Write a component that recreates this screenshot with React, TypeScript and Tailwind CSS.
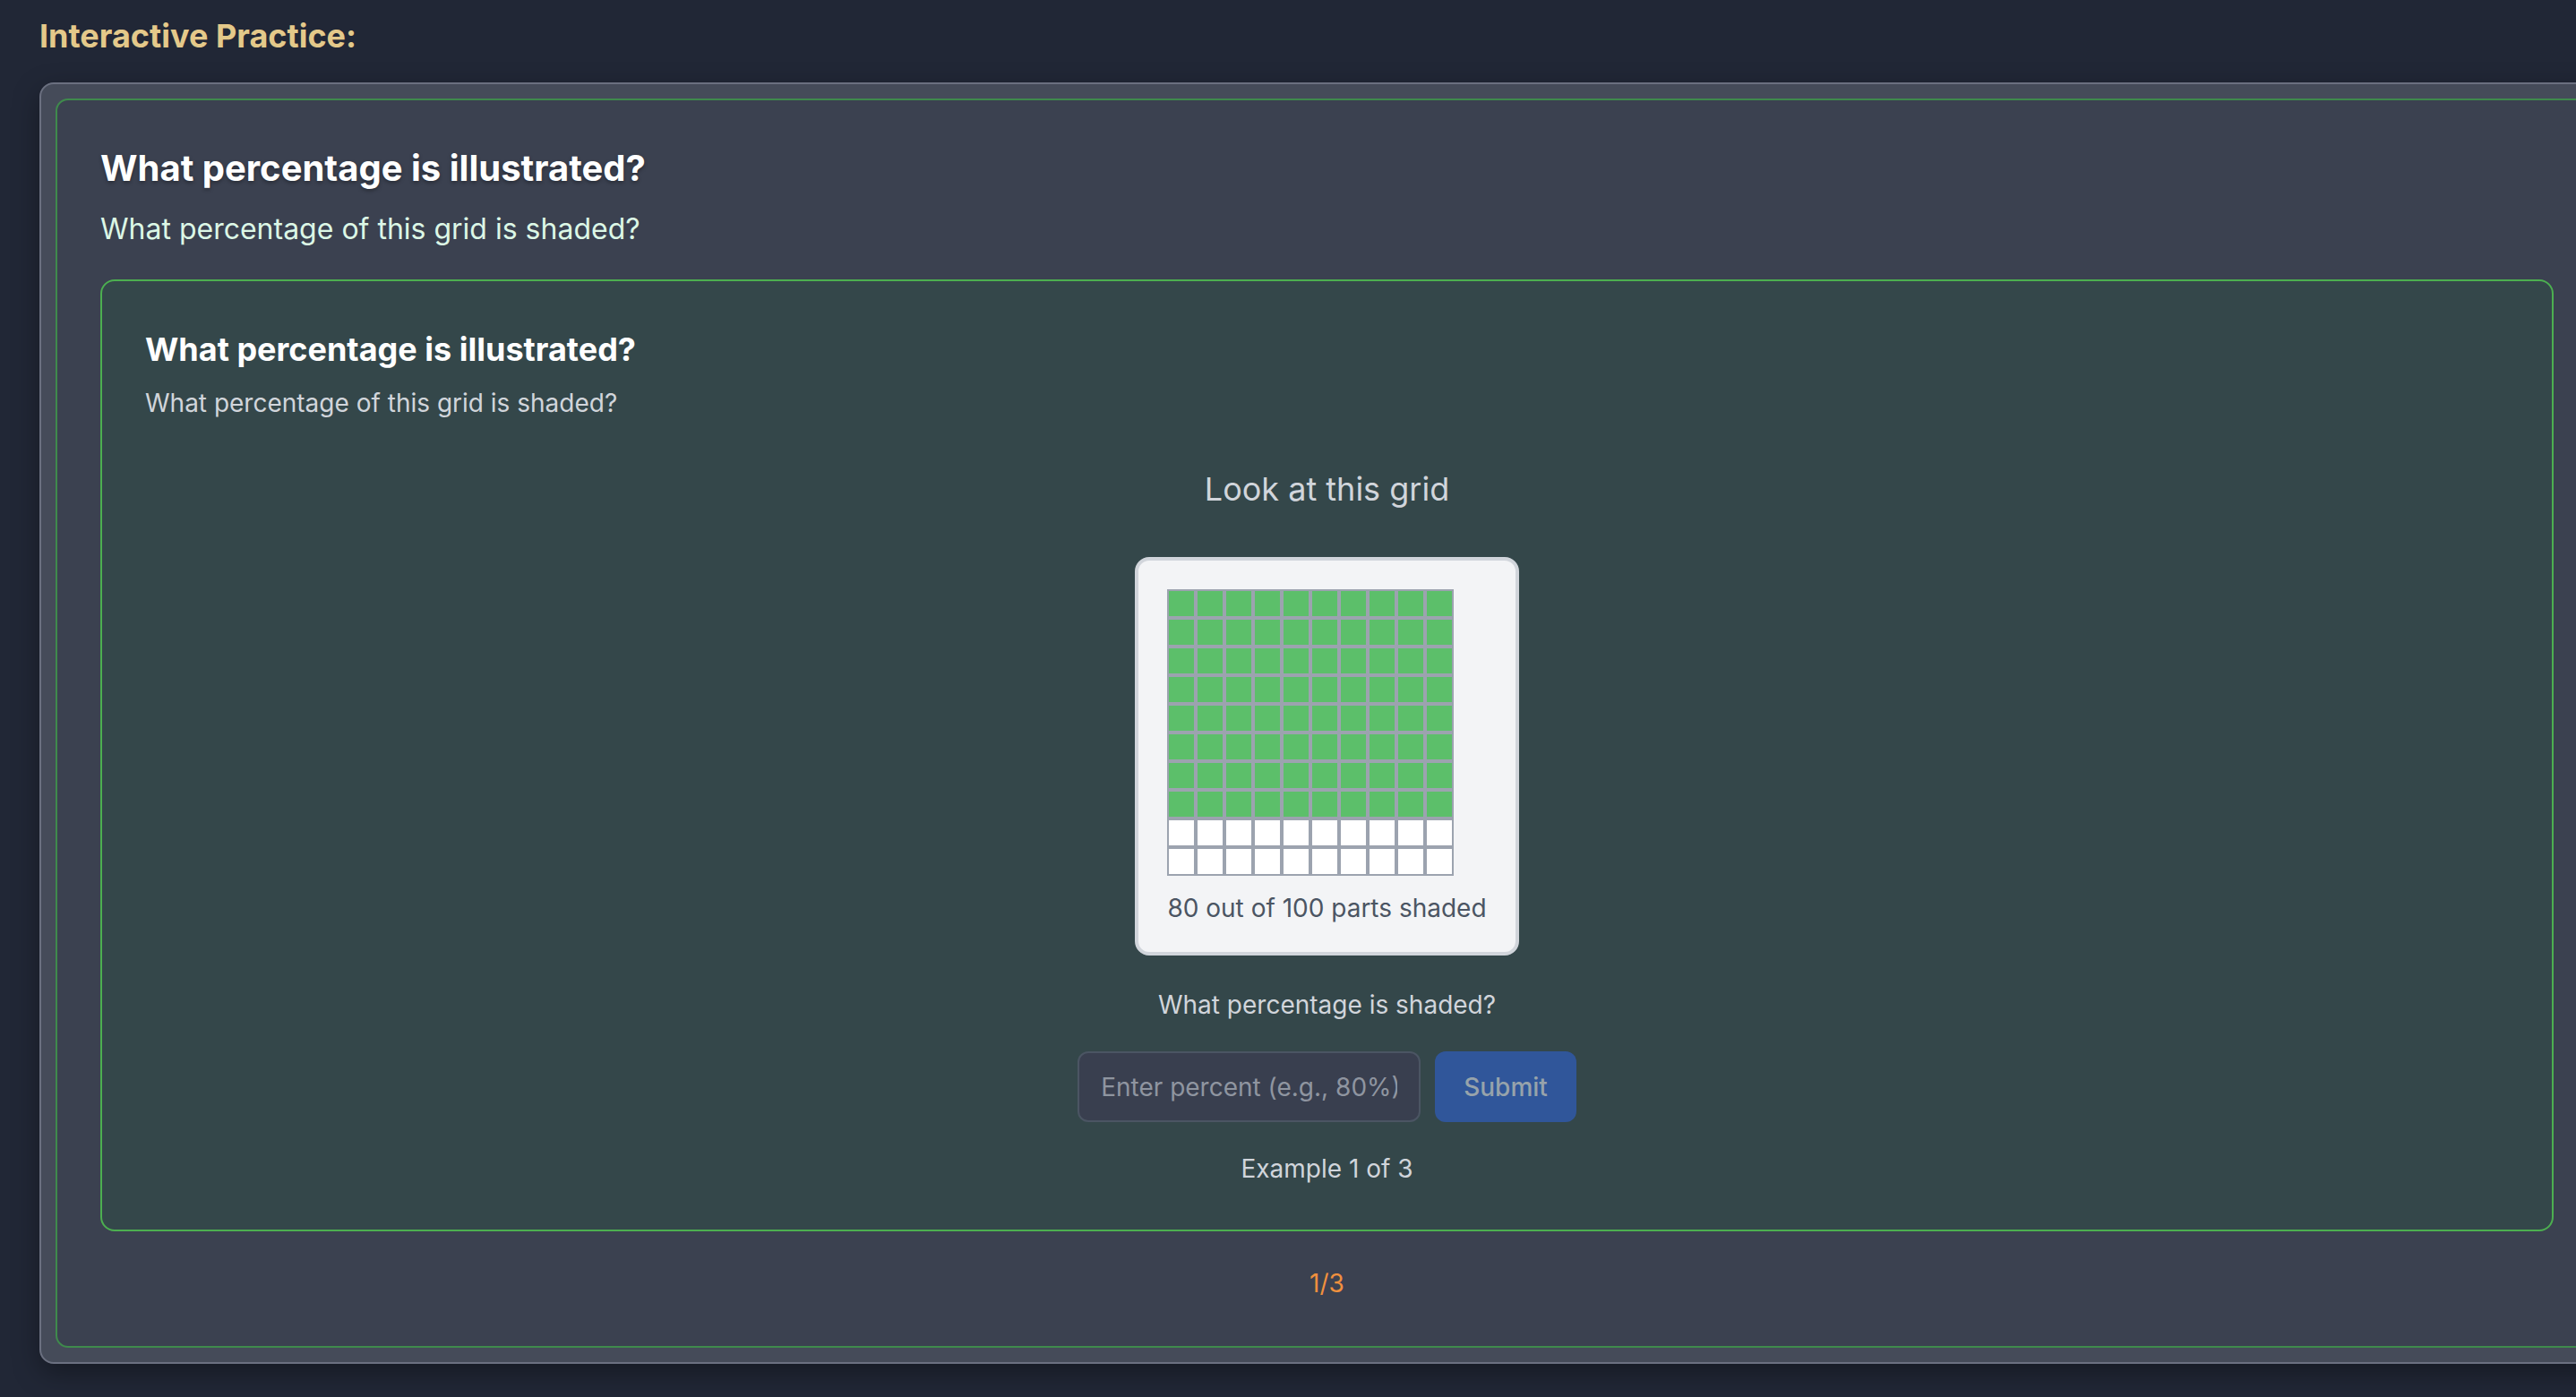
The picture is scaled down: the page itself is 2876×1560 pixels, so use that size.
import React from "react";

export default function App() {
  const cells = Array.from({ length: 100 }, (_, i) => i < 80);
  return (
    <div className="min-h-screen w-full overflow-hidden bg-[#212736] pl-[44px] pt-3 font-['Inter',sans-serif]">
      <h3 className="mb-6 text-[36px] font-bold leading-[56px] text-[#e4c98a]">Interactive Practice:</h3>
      <div className="w-[2875px] rounded-2xl border-2 border-[#6b7080] bg-[#454b59] p-4 shadow-[0_10px_30px_rgba(0,0,0,0.35)]">
        <div className="rounded-[14px] border-2 border-[#3f8a4c] bg-[#3b4150] px-12 pb-[50px] pt-12">
          <h2 className="text-[40px] font-bold leading-[56px] text-white [text-shadow:0_2px_4px_rgba(0,0,0,0.35)]">
            What percentage is illustrated?
          </h2>
          <p className="mt-4 text-[32px] leading-[48px] text-[#dcf7e6]">What percentage of this grid is shaded?</p>
          <div className="mt-8 rounded-2xl border-2 border-[#4caf50] bg-[#34474a] p-12">
            <h4 className="text-[36px] font-bold leading-[56px] text-white">What percentage is illustrated?</h4>
            <p className="mt-3 text-[28px] leading-[40px] text-[#d1d5db]">What percentage of this grid is shaded?</p>
            <div className="mt-12 flex flex-col items-center">
              <p className="text-[36px] leading-[56px] text-[#d1d5db]">Look at this grid</p>
              <div className="mt-12 rounded-2xl border-4 border-[#d1d5db] bg-[#f3f4f6] px-8 pb-[29px] pt-8">
                <div className="grid w-[320px] grid-cols-10">
                  {cells.map((on, i) => (
                    <div
                      key={i}
                      className={
                        on
                          ? "h-8 w-8 border-2 border-[#9ca3af] bg-[#5cbf6a]"
                          : "h-8 w-8 border-2 border-[#9ca3af] bg-white"
                      }
                    />
                  ))}
                </div>
                <p className="mt-4 text-[28px] leading-[40px] text-[#4b5563]">80 out of 100 parts shaded</p>
              </div>
              <p className="mt-[35px] text-[28px] leading-[40px] text-[#d1d5db]">What percentage is shaded?</p>
              <div className="mt-8 flex items-center gap-4">
                <input
                  type="text"
                  placeholder="Enter percent (e.g., 80%)"
                  className="h-[79px] w-[383px] rounded-xl border-2 border-[#4b5563] bg-[#393f4f] px-6 text-[28px] text-white outline-none placeholder:text-[#8f95a0]"
                />
                <button
                  disabled
                  className="h-[79px] rounded-xl bg-[#30569a] px-8 text-[28px] font-medium text-[#97a3ab]"
                >
                  Submit
                </button>
              </div>
              <p className="mt-8 text-[28px] leading-[40px] text-[#d1d5db]">Example 1 of 3</p>
            </div>
          </div>
          <p className="mt-[38px] text-center text-[28px] leading-[40px] text-[#f0903e]">1/3</p>
        </div>
      </div>
    </div>
  );
}
